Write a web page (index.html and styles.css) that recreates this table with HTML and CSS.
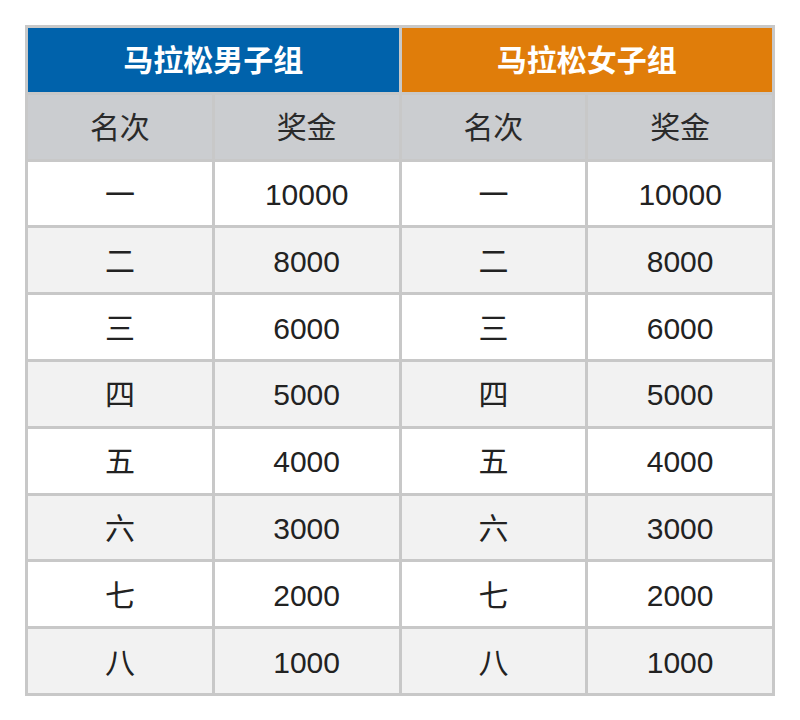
FILE: index.html
```html
<!DOCTYPE html>
<html lang="zh-CN">
<head>
<meta charset="utf-8">
<link rel="stylesheet" href="styles.css">
</head>
<body>
<table class="prize">
  <thead>
    <tr class="title-row">
      <th colspan="2" class="men">马拉松男子组</th>
      <th colspan="2" class="women">马拉松女子组</th>
    </tr>
    <tr class="col-row">
      <th>名次</th><th>奖金</th><th>名次</th><th>奖金</th>
    </tr>
  </thead>
  <tbody>
    <tr><td>一</td><td>10000</td><td>一</td><td>10000</td></tr>
    <tr><td>二</td><td>8000</td><td>二</td><td>8000</td></tr>
    <tr><td>三</td><td>6000</td><td>三</td><td>6000</td></tr>
    <tr><td>四</td><td>5000</td><td>四</td><td>5000</td></tr>
    <tr><td>五</td><td>4000</td><td>五</td><td>4000</td></tr>
    <tr><td>六</td><td>3000</td><td>六</td><td>3000</td></tr>
    <tr><td>七</td><td>2000</td><td>七</td><td>2000</td></tr>
    <tr><td>八</td><td>1000</td><td>八</td><td>1000</td></tr>
  </tbody>
</table>
</body>
</html>
```
FILE: styles.css
```css
html, body {
  margin: 0;
  padding: 0;
  background: #ffffff;
}
body {
  padding: 25px;
  font-family: "Liberation Sans", "Noto Sans CJK SC", sans-serif;
  color: #222222;
}
.prize {
  border-collapse: collapse;
  width: 750px;
  table-layout: fixed;
  border: 3px solid #c8c8c8;
}
.prize th,
.prize td {
  border: 3px solid #c8c8c8;
  height: 60.8px;
  padding: 3px 0 0 0;
  text-align: center;
  vertical-align: middle;
  font-size: 30px;
  font-weight: 400;
  line-height: 1;
}
.title-row th {
  color: #ffffff;
  font-weight: 700;
  font-size: 30px;
}
.title-row .men {
  background: #0062ab;
}
.title-row .women {
  background: #e07d0a;
}
.col-row th {
  background: #cbcdd0;
  color: #2a2a2a;
}
tbody tr:nth-child(odd) td {
  background: #ffffff;
}
tbody tr:nth-child(even) td {
  background: #f2f2f2;
}
```
